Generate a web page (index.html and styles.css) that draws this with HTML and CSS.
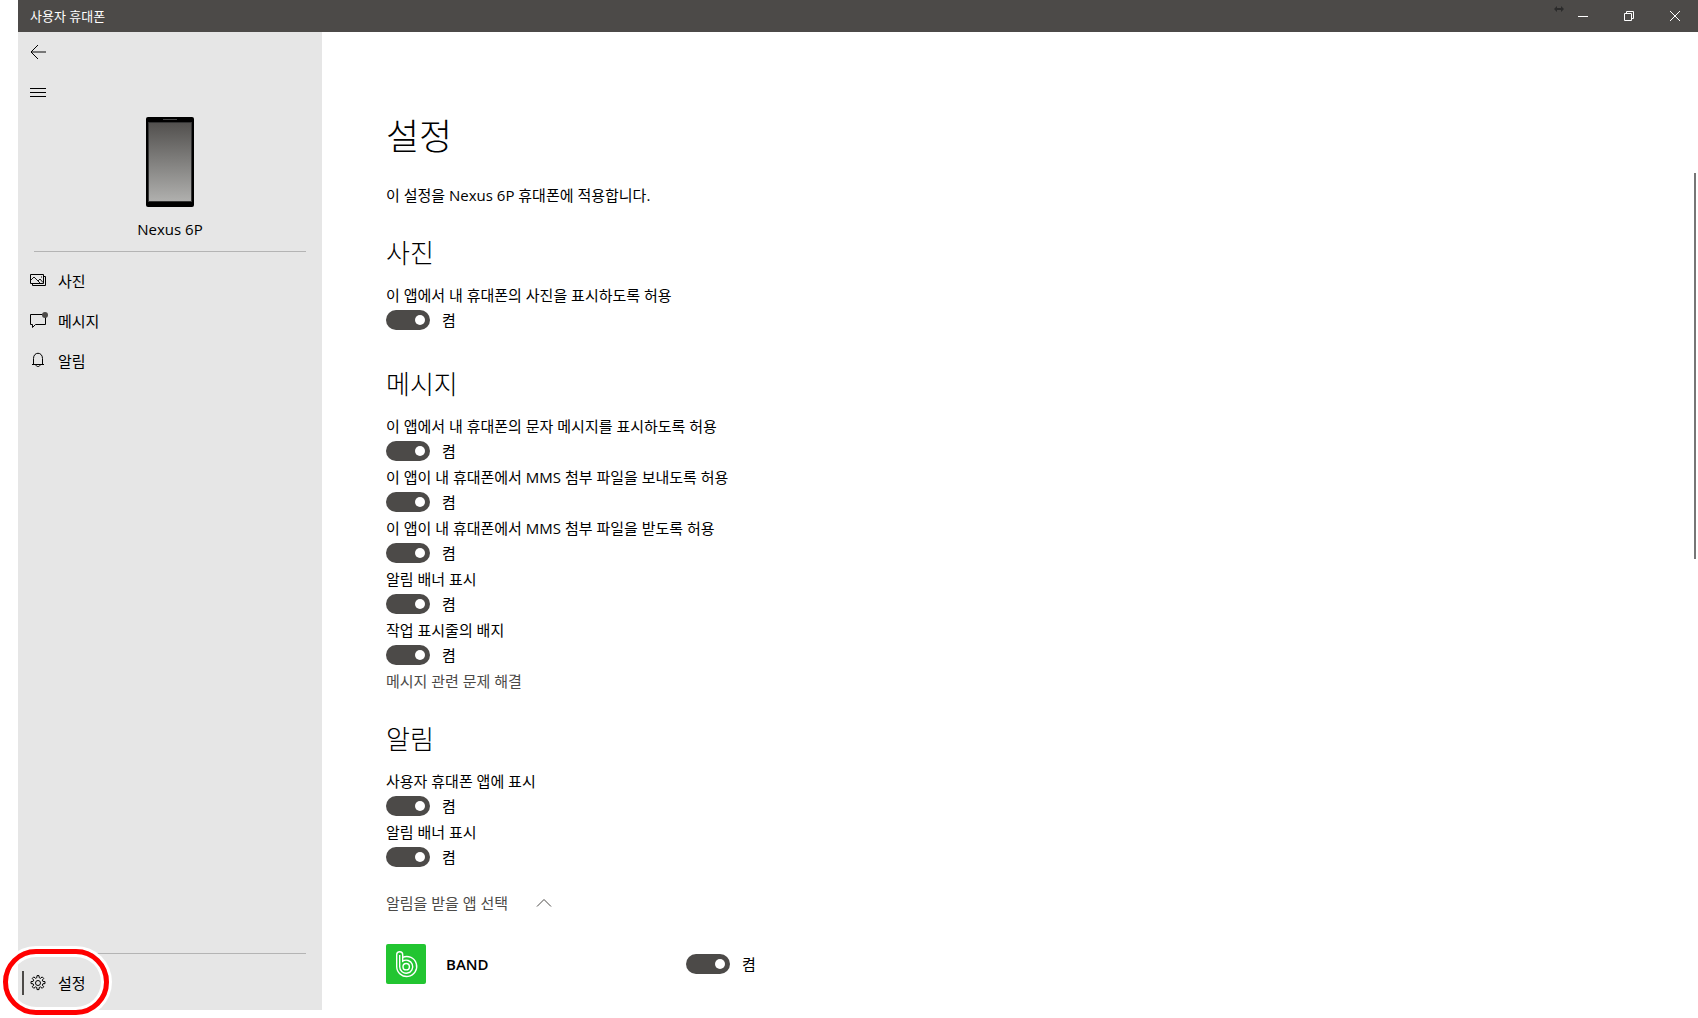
FILE: index.html
```html
<!DOCTYPE html>
<html lang="ko">
<head>
  <meta charset="UTF-8" />
  <meta name="viewport" content="width=device-width, initial-scale=1.0" />
  <title>사용자 휴대폰</title>
  <link rel="stylesheet" href="styles.css">
</head>
<body>
  <header class="titlebar">
    <span class="app-title">사용자 휴대폰</span>
    <svg class="resize-mark" width="10" height="6" viewBox="0 0 10 6"><path d="M0 3l3-3v2h4V0l3 3-3 3V4H3v2z" fill="#2b2b2b"/></svg>
    <div class="window-buttons">
      <button type="button" aria-label="최소화">
        <svg width="10" height="10" viewBox="0 0 10 10"><path d="M0 5.5h10"/></svg>
      </button>
      <button type="button" aria-label="이전 크기로 복원">
        <svg width="10" height="10" viewBox="0 0 10 10"><path d="M.5 2.5h7v7h-7zM2.5 2.5v-2h7v7h-2"/></svg>
      </button>
      <button type="button" aria-label="닫기">
        <svg width="10" height="10" viewBox="0 0 10 10"><path d="M0 0l10 10M10 0L0 10"/></svg>
      </button>
    </div>
  </header>

  <div class="app">
    <aside class="sidebar">
      <button type="button" class="icon-button" aria-label="뒤로">
        <svg width="16" height="16" viewBox="0 0 16 16"><path d="M1 8h15" stroke="#777" stroke-width="2"/><path d="M8 1L1 8l7 7"/></svg>
      </button>
      <button type="button" class="icon-button" aria-label="메뉴">
        <svg width="16" height="16" viewBox="0 0 16 16"><path d="M0 4.5h16M0 8.5h16M0 12.5h16"/></svg>
      </button>

      <div class="device">
        <svg width="48" height="90" viewBox="0 0 48 90">
          <defs>
            <linearGradient id="screen" x1="0" y1="0" x2="0" y2="1">
              <stop offset="0" stop-color="#52504e"/>
              <stop offset="1" stop-color="#b0b0ae"/>
            </linearGradient>
          </defs>
          <rect width="48" height="90" rx="2" fill="#000" stroke="none"/>
          <rect x="2.5" y="5.5" width="43" height="79" fill="url(#screen)" stroke="#333"/>
          <path d="M17 2.5h14" stroke="#444"/>
        </svg>
        <span class="device-name">Nexus 6P</span>
      </div>

      <nav class="menu">
        <a href="#photos" class="menu-item">
          <svg width="18" height="18" viewBox="0 0 18 18"><path d="M.5 2.5h13v9H.5zM13.5 4.5h2v9h-13v-2"/><path d="M1 8l3-3 6 6M8 9l2-2 3 3.5" stroke-width=".9"/><path d="M11 5h1"/></svg>
          사진
        </a>
        <a href="#messages" class="menu-item">
          <svg width="18" height="18" viewBox="0 0 18 18"><path d="M.5 2.5h15v10h-10l-3 3v-3h-2z"/><circle cx="15" cy="3" r="3" fill="#4c4a48" stroke="none"/></svg>
          메시지
        </a>
        <a href="#notifications" class="menu-item">
          <svg width="18" height="18" viewBox="0 0 18 18"><path d="M2 12.5h12M3.5 12.5v-6c0-7 9-7 9 0v6M6 13c0 2 4 2 4 0"/></svg>
          알림
        </a>
      </nav>

      <div class="menu menu-bottom">
        <a href="#settings" class="menu-item active">
          <svg width="18" height="16" viewBox="0 0 18 16"><path d="M6.8 2.7L7 .6h2l.2 2.1 1.3.6 1.7-1.4 1.5 1.5-1.4 1.7.6 1.3 2.1.2v2l-2.1.2-.6 1.3 1.4 1.7-1.5 1.5-1.7-1.4-1.3.6-.2 2.1H7l-.2-2.1-1.3-.6-1.7 1.4-1.5-1.5 1.4-1.7-.6-1.3-2.1-.2v-2l2.1-.2.6-1.3-1.4-1.7 1.5-1.5 1.7 1.4z"/><circle cx="8" cy="8" r="2.5"/></svg>
          설정
          <span class="highlight"></span>
        </a>
      </div>
    </aside>

    <main class="content" id="settings">
      <h1>설정</h1>
      <p class="intro">이 설정을 Nexus 6P 휴대폰에 적용합니다.</p>

      <section id="photos">
        <h2>사진</h2>
        <div class="setting">
          <label for="allowPhotos">이 앱에서 내 휴대폰의 사진을 표시하도록 허용</label>
          <div class="toggle"><input type="checkbox" id="allowPhotos" checked><span>켬</span></div>
        </div>
      </section>

      <section id="messages">
        <h2>메시지</h2>
        <div class="setting">
          <label for="allowMessages">이 앱에서 내 휴대폰의 문자 메시지를 표시하도록 허용</label>
          <div class="toggle"><input type="checkbox" id="allowMessages" checked><span>켬</span></div>
        </div>
        <div class="setting">
          <label for="sendMms">이 앱이 내 휴대폰에서 MMS 첨부 파일을 보내도록 허용</label>
          <div class="toggle"><input type="checkbox" id="sendMms" checked><span>켬</span></div>
        </div>
        <div class="setting">
          <label for="receiveMms">이 앱이 내 휴대폰에서 MMS 첨부 파일을 받도록 허용</label>
          <div class="toggle"><input type="checkbox" id="receiveMms" checked><span>켬</span></div>
        </div>
        <div class="setting">
          <label for="messageBanner">알림 배너 표시</label>
          <div class="toggle"><input type="checkbox" id="messageBanner" checked><span>켬</span></div>
        </div>
        <div class="setting">
          <label for="taskbarBadge">작업 표시줄의 배지</label>
          <div class="toggle"><input type="checkbox" id="taskbarBadge" checked><span>켬</span></div>
        </div>
        <a href="#help" class="help-link">메시지 관련 문제 해결</a>
      </section>

      <section id="notifications">
        <h2>알림</h2>
        <div class="setting">
          <label for="showInApp">사용자 휴대폰 앱에 표시</label>
          <div class="toggle"><input type="checkbox" id="showInApp" checked><span>켬</span></div>
        </div>
        <div class="setting">
          <label for="notifyBanner">알림 배너 표시</label>
          <div class="toggle"><input type="checkbox" id="notifyBanner" checked><span>켬</span></div>
        </div>
        <button type="button" class="expander" aria-expanded="true">
          알림을 받을 앱 선택
          <svg width="16" height="10" viewBox="0 0 16 10"><path d="M1 8.5l7-7 7 7"/></svg>
        </button>
        <div class="app-row">
          <svg class="app-logo" width="40" height="40" viewBox="0 0 40 40">
            <rect width="40" height="40" rx="2" fill="#22c531"/>
            <g fill="none" stroke="#fff" stroke-width="1.4">
              <path d="M10.7 22.7v-12a3 3 0 0 1 6 0v2.6a10 10 0 1 1-6 9.4z"/>
              <path d="M13.7 11v11.7a6.500 6.500 0 1 0 3-5.500v-4"/>
              <circle cx="20.2" cy="22.7" r="3.2"/>
            </g>
          </svg>
          <label for="bandApp">BAND</label>
          <div class="toggle"><input type="checkbox" id="bandApp" checked><span>켬</span></div>
        </div>
      </section>
      <div class="scroll-thumb"></div>
    </main>
  </div>
</body>
</html>
```
FILE: styles.css
```css
* {
  box-sizing: border-box;
}
body {
  margin: 0;
  padding: 0 0 8px 18px;
  height: 100vh;
  display: flex;
  flex-direction: column;
  overflow: hidden;
  background: #fff;
  color: #000;
  font-family: "Open Sans", "Noto Sans CJK KR", sans-serif;
  font-size: 15px;
  line-height: 20px;
}
svg {
  display: block;
  fill: none;
  stroke: #000;
}
button {
  padding: 0;
  border: none;
  background: none;
  font: inherit;
  cursor: pointer;
}
a {
  color: inherit;
  text-decoration: none;
}

/* title bar */
.titlebar {
  position: relative;
  display: flex;
  justify-content: space-between;
  align-items: center;
  flex: none;
  height: 32px;
  padding-left: 12px;
  background: #4c4a48;
  color: #fff;
}
.app-title {
  font-size: 13px;
}
.window-buttons {
  display: flex;
}
.window-buttons button {
  display: flex;
  justify-content: center;
  align-items: center;
  width: 46px;
  height: 32px;
}
.window-buttons svg {
  stroke: #fff;
}
.resize-mark {
  position: absolute;
  top: 6px;
  right: 134px;
  stroke: none;
}

.app {
  display: flex;
  flex: 1;
  min-height: 0;
}

/* sidebar */
.sidebar {
  display: flex;
  flex-direction: column;
  flex: none;
  width: 304px;
  background: #e6e6e6;
}
.icon-button {
  height: 40px;
  width: 40px;
  padding-left: 12px;
}
.device {
  display: flex;
  flex-direction: column;
  align-items: center;
  gap: 12px;
  margin: 5px 16px 0;
  padding-bottom: 12px;
  border-bottom: 1px solid #b4b4b4;
}
.menu {
  padding-top: 9px;
}
.menu-item {
  position: relative;
  display: flex;
  align-items: center;
  gap: 10px;
  height: 40px;
  padding-left: 12px;
}
.menu-bottom {
  margin-top: auto;
  padding-bottom: 7px;
}
.menu-bottom::before {
  content: "";
  display: block;
  margin: -9px 16px 9px;
  border-top: 1px solid #b4b4b4;
}
.menu-item.active::before {
  content: "";
  position: absolute;
  left: 4px;
  top: 8px;
  width: 2px;
  height: 24px;
  background: #4c4a48;
}
/* red ring round the settings entry */
.highlight {
  position: absolute;
  left: -15px;
  top: -14px;
  width: 106px;
  height: 66px;
  border: 5px solid #f00;
  border-radius: 34px;
  box-shadow: 0 0 0 3px #fff, inset 0 0 0 3px #fff;
}

/* settings page */
.content {
  position: relative;
  flex: 1;
  padding: 78px 64px 0;
  overflow: hidden;
}
h1, h2, p {
  margin: 0;
}
h1, h2 {
  font-family: "Noto Sans CJK KR", sans-serif;
  font-weight: 300;
}
h1 {
  font-size: 36px;
  line-height: 48px;
  margin-bottom: 27px;
}
h2 {
  font-size: 26px;
  line-height: 32px;
  margin-bottom: 17px;
}
section {
  display: flow-root;
  padding-top: 31px;
}
.setting {
  margin-bottom: 6px;
}
.setting label {
  display: block;
  margin-bottom: 5px;
}
.toggle {
  display: flex;
  align-items: center;
  gap: 12px;
  height: 20px;
}
.toggle input {
  appearance: none;
  position: relative;
  width: 44px;
  height: 20px;
  margin: 0;
  border-radius: 10px;
  background: #4c4a48;
}
.toggle input::before {
  content: "";
  position: absolute;
  top: 5px;
  left: 5px;
  width: 10px;
  height: 10px;
  border-radius: 50%;
  background: #fff;
}
.toggle input:checked::before {
  left: 29px;
}
.help-link, .expander {
  color: #4c4a48;
}
.help-link {
  display: block;
}
.expander {
  display: flex;
  align-items: center;
  gap: 28px;
  margin-top: 26px;
}
.expander svg {
  stroke: #4c4a48;
}
.app-row {
  display: flex;
  align-items: center;
  margin-top: 31px;
}
.app-row label {
  width: 260px;
  padding-left: 20px;
  font-weight: 600;
}
.app-logo {
  stroke: none;
}
.scroll-thumb {
  position: absolute;
  top: 141px;
  right: 2px;
  width: 2px;
  height: 386px;
  background: #767676;
}
```
